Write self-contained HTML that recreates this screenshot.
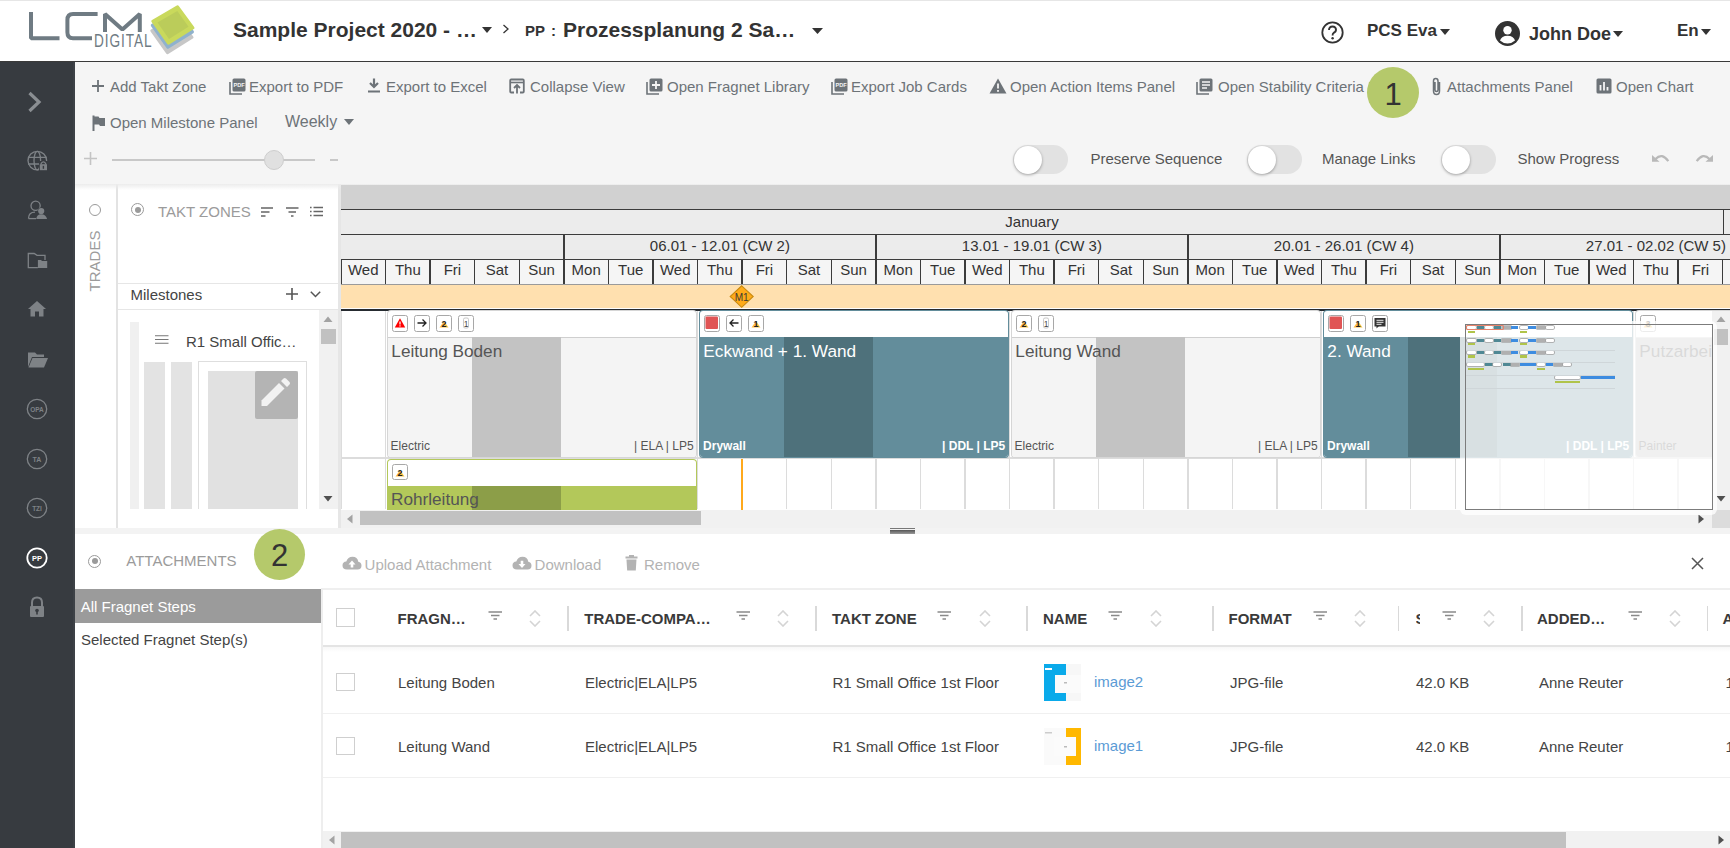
<!DOCTYPE html>
<html><head><meta charset="utf-8"><style>
html,body{margin:0;padding:0;}
body{width:1730px;height:848px;position:relative;overflow:hidden;background:#fff;font-family:"Liberation Sans", sans-serif;}
.t{position:absolute;line-height:1;white-space:nowrap;}
svg{display:block;}
</style></head><body>
<div style="position:absolute;left:0px;top:0px;width:1730px;height:61px;background:#fff;"></div>
<div style="position:absolute;left:0px;top:0px;width:1730px;height:1px;background:#e6e6e6;"></div>
<div style="position:absolute;left:0px;top:61px;width:1730px;height:1px;background:#3a3a3a;"></div>
<svg style="position:absolute;left:0px;top:0px;" width="200" height="61" viewBox="0 0 200 61">
<g fill="none" stroke="#6f7b83" stroke-width="4" stroke-linejoin="bevel">
<path d="M31 12 V38.3 H59.5"/>
<path d="M97.6 14 H73 Q67.4 14 67.4 20 V32.3 Q67.4 38.3 73 38.3 H92"/>
<path d="M105 32 V14 L122.4 29.5 L139.8 14 V32"/>
</g>
<text x="0" y="0" font-family="Liberation Sans" font-size="17.5" fill="#6f7b83" transform="translate(94,47.4) scale(0.78,1)" letter-spacing="1.2">DIGITAL</text>
<g stroke-linejoin="round" stroke-width="3">
<path d="M176.6 16.4 L192 37.3 L167.4 52.7 L151.8 30.7 Z" fill="#c7c7c7" stroke="#c7c7c7"/>
<path d="M177.1 11 L192.5 31.9 L167.9 47.3 L152.3 25.3 Z" fill="#8fb2cd" stroke="#8fb2cd"/>
<path d="M177.6 6.9 L193 27.8 L168.4 43.2 L152.8 21.2 Z" fill="#c9d95c" stroke="#c9d95c"/>
<path d="M177.3 11 L188.5 26.8 L169 39 L157.5 22.5 Z" fill="#bbcc5a"/>
</g>
</svg>
<div class="t" style="left:233px;top:19.22px;font-size:21px;color:#333;font-weight:bold;">Sample Project 2020 - …</div>
<svg style="position:absolute;left:482px;top:27px;" width="10" height="6" viewBox="0 0 10 6"><path d="M0 0 H10 L5 6 Z" fill="#333"/></svg>
<svg style="position:absolute;left:502px;top:24px;" width="8" height="10" viewBox="0 0 8 10"><path d="M1.5 1 L6 5 L1.5 9" fill="none" stroke="#333" stroke-width="1.3"/></svg>
<div class="t" style="left:525px;top:23.30px;font-size:15px;color:#333;font-weight:bold;">PP</div>
<div class="t" style="left:551px;top:23.30px;font-size:15px;color:#333;font-weight:bold;">:</div>
<div class="t" style="left:563px;top:19.22px;font-size:21px;color:#333;font-weight:bold;">Prozessplanung 2 Sa…</div>
<svg style="position:absolute;left:812px;top:28px;" width="11" height="6" viewBox="0 0 11 6"><path d="M0 0 H11 L5.5 6 Z" fill="#333"/></svg>
<svg style="position:absolute;left:1321px;top:21px;" width="23" height="23" viewBox="0 0 23 23"><circle cx="11.5" cy="11.5" r="10.2" fill="none" stroke="#333" stroke-width="1.8"/><path d="M8 9 Q8 5.5 11.5 5.5 Q15 5.5 15 8.8 Q15 11 12.5 12 Q11.6 12.5 11.6 14.5" fill="none" stroke="#333" stroke-width="1.9"/><circle cx="11.6" cy="17.3" r="1.2" fill="#333"/></svg>
<div class="t" style="left:1367px;top:21.61px;font-size:17px;color:#333;font-weight:bold;">PCS Eva</div>
<svg style="position:absolute;left:1440px;top:29px;" width="10" height="6" viewBox="0 0 10 6"><path d="M0 0 H10 L5 6 Z" fill="#333"/></svg>
<svg style="position:absolute;left:1495px;top:21px;" width="25" height="25" viewBox="0 0 25 25"><circle cx="12.5" cy="12.5" r="12.5" fill="#333"/><circle cx="12.5" cy="9.2" r="4.2" fill="#fff"/><path d="M5 19.5 Q6.5 14.8 12.5 14.8 Q18.5 14.8 20 19.5 Q16.8 22.5 12.5 22.5 Q8.2 22.5 5 19.5 Z" fill="#fff"/></svg>
<div class="t" style="left:1529px;top:24.76px;font-size:18px;color:#333;font-weight:bold;">John Doe</div>
<svg style="position:absolute;left:1613px;top:31px;" width="10" height="6" viewBox="0 0 10 6"><path d="M0 0 H10 L5 6 Z" fill="#333"/></svg>
<div class="t" style="left:1677px;top:21.61px;font-size:17px;color:#333;font-weight:bold;">En</div>
<svg style="position:absolute;left:1701px;top:29px;" width="10" height="6" viewBox="0 0 10 6"><path d="M0 0 H10 L5 6 Z" fill="#333"/></svg>
<div style="position:absolute;left:0px;top:62px;width:75px;height:786px;background:#373b40;"></div>
<div style="position:absolute;left:73px;top:62px;width:2px;height:786px;background:#3d4146;"></div>
<svg style="position:absolute;left:27px;top:91px;" width="15" height="22" viewBox="0 0 15 22"><path d="M2.5 2 L12 11 L2.5 20" fill="none" stroke="#8a8e92" stroke-width="3.2"/></svg>
<svg style="position:absolute;left:25px;top:149px;" width="24" height="24" viewBox="0 0 24 24"><g fill="none" stroke="#7e8286" stroke-width="1.3"><circle cx="12.3" cy="11.6" r="9.3"/><ellipse cx="12.3" cy="11.6" rx="3.3" ry="9.3"/><path d="M3 8.4 H21.6 M3 15 H15"/></g><rect x="14" y="12" width="9" height="10" fill="#373b40"/><rect x="14.8" y="15.2" width="7.2" height="6" fill="#7e8286"/><path d="M16.2 15.5 V14.3 Q18.4 11.3 20.6 14.3 V15.5" fill="none" stroke="#7e8286" stroke-width="1.3"/><rect x="17.7" y="16.8" width="1.4" height="3" fill="#373b40"/></svg>
<svg style="position:absolute;left:27px;top:200px;" width="22" height="22" viewBox="0 0 22 22"><g fill="none" stroke="#7e8286" stroke-width="1.3"><circle cx="8.6" cy="5.8" r="4.6"/><path d="M1.5 18.6 Q1.5 12.2 8 12.2"/><path d="M1.5 18.6 H9"/></g><circle cx="14.2" cy="11" r="3.6" fill="#373b40"/><circle cx="14.2" cy="11" r="3.1" fill="#7e8286"/><path d="M9.3 18.9 Q9.6 14.2 14.2 14.2 Q18.9 14.2 20.1 18.9 Z" fill="#7e8286"/></svg>
<svg style="position:absolute;left:27px;top:251px;" width="22" height="20" viewBox="0 0 22 20"><path d="M10.9 16.6 H1.3 V2.5 H7.2 L10 4.4 H18 V9" fill="none" stroke="#7e8286" stroke-width="1.3"/><path d="M10.9 9 H14 L15 10 H20.2 V17.1 H10.9 Z" fill="#7e8286"/></svg>
<svg style="position:absolute;left:27px;top:300px;" width="20" height="18" viewBox="0 0 20 18"><path d="M10 1 L19 9 H16.5 V16.5 H12 V11.5 H8 V16.5 H3.5 V9 H1 Z" fill="#7e8286"/></svg>
<svg style="position:absolute;left:27px;top:351px;" width="22" height="18" viewBox="0 0 22 18"><path d="M1 1.5 H8 L10 3.5 H17 V6 H5 L1 16 Z" fill="#7e8286"/><path d="M5.5 7 H21 L17 16.5 H1.5 Z" fill="#7e8286"/></svg>
<svg style="position:absolute;left:26px;top:398px;" width="22" height="22" viewBox="0 0 22 22"><circle cx="11" cy="11" r="9.7" fill="none" stroke="#7e8286" stroke-width="1.3"/><text x="11" y="13.5" text-anchor="middle" font-family="Liberation Sans" font-size="6.5" fill="#7e8286" font-weight="bold">OPA</text></svg>
<svg style="position:absolute;left:26px;top:448px;" width="22" height="22" viewBox="0 0 22 22"><circle cx="11" cy="11" r="9.7" fill="none" stroke="#7e8286" stroke-width="1.3"/><text x="11" y="13.5" text-anchor="middle" font-family="Liberation Sans" font-size="7" fill="#7e8286" font-weight="bold">TA</text></svg>
<svg style="position:absolute;left:26px;top:497px;" width="22" height="22" viewBox="0 0 22 22"><circle cx="11" cy="11" r="9.7" fill="none" stroke="#7e8286" stroke-width="1.3"/><text x="11" y="13.5" text-anchor="middle" font-family="Liberation Sans" font-size="6.5" fill="#7e8286" font-weight="bold">TZI</text></svg>
<svg style="position:absolute;left:26px;top:547px;" width="22" height="22" viewBox="0 0 22 22"><circle cx="11" cy="11" r="9.7" fill="none" stroke="#fff" stroke-width="1.8"/><text x="11" y="13.8" text-anchor="middle" font-family="Liberation Sans" font-size="7.5" fill="#fff" font-weight="bold">PP</text></svg>
<svg style="position:absolute;left:28px;top:596px;" width="18" height="22" viewBox="0 0 18 22"><path d="M4 10 V6.5 Q4 1.5 9 1.5 Q14 1.5 14 6.5 V10" fill="none" stroke="#7e8286" stroke-width="2"/><rect x="2" y="10" width="14" height="11" rx="1" fill="#7e8286"/><circle cx="9" cy="14.5" r="1.8" fill="#373b40"/><rect x="8.2" y="15" width="1.6" height="3.5" fill="#373b40"/></svg>
<div style="position:absolute;left:75px;top:62px;width:1655px;height:122px;background:#f5f5f5;"></div>
<!--TOOLBAR-->
<svg style="position:absolute;left:92px;top:80px;" width="12" height="12" viewBox="0 0 12 12"><path d="M6 0 V12 M0 6 H12" stroke="#6d7378" stroke-width="1.8"/></svg>
<div class="t" style="left:110px;top:79.30px;font-size:15px;color:#6d7378;font-weight:normal;">Add Takt Zone</div>
<svg style="position:absolute;left:229px;top:78px;" width="17" height="17" viewBox="0 0 17 17"><path d="M1 4 V16 H13" fill="none" stroke="#6d7378" stroke-width="1.6"/><rect x="3.5" y="0.5" width="13" height="13" rx="1.5" fill="#6d7378"/><text x="10" y="8.6" text-anchor="middle" font-family="Liberation Sans" font-weight="bold" font-size="5.6" fill="#f4f4f4">PDF</text></svg>
<div class="t" style="left:249px;top:79.30px;font-size:15px;color:#6d7378;font-weight:normal;">Export to PDF</div>
<svg style="position:absolute;left:367px;top:78px;" width="14" height="15" viewBox="0 0 14 15"><path d="M7 0.5 V8.5 M3 5 L7 9 L11 5" fill="none" stroke="#6d7378" stroke-width="2.2"/><rect x="1" y="12.5" width="12" height="2" fill="#6d7378"/></svg>
<div class="t" style="left:386px;top:79.30px;font-size:15px;color:#6d7378;font-weight:normal;">Export to Excel</div>
<svg style="position:absolute;left:509px;top:78px;" width="16" height="16" viewBox="0 0 16 16"><path d="M5 14.5 H2.2 Q1.2 14.5 1.2 13.5 V2.5 Q1.2 1.5 2.2 1.5 H13.8 Q14.8 1.5 14.8 2.5 V13.5 Q14.8 14.5 13.8 14.5 H11" fill="none" stroke="#6d7378" stroke-width="1.8"/><path d="M8 15.5 V7.5 M5 10 L8 7 L11 10" fill="none" stroke="#6d7378" stroke-width="1.8"/><path d="M1.2 4.5 H14.8" stroke="#6d7378" stroke-width="1.6"/></svg>
<div class="t" style="left:530px;top:79.30px;font-size:15px;color:#6d7378;font-weight:normal;">Collapse View</div>
<svg style="position:absolute;left:646px;top:78px;" width="17" height="17" viewBox="0 0 17 17"><path d="M1 4 V16 H13" fill="none" stroke="#6d7378" stroke-width="1.6"/><rect x="3.5" y="0.5" width="13" height="13" rx="1.5" fill="#6d7378"/><path d="M10 3 V11 M6 7 H14" stroke="#f4f4f4" stroke-width="1.8"/></svg>
<div class="t" style="left:667px;top:79.30px;font-size:15px;color:#6d7378;font-weight:normal;">Open Fragnet Library</div>
<svg style="position:absolute;left:831px;top:78px;" width="17" height="17" viewBox="0 0 17 17"><path d="M1 4 V16 H13" fill="none" stroke="#6d7378" stroke-width="1.6"/><rect x="3.5" y="0.5" width="13" height="13" rx="1.5" fill="#6d7378"/><text x="10" y="8.6" text-anchor="middle" font-family="Liberation Sans" font-weight="bold" font-size="5.6" fill="#f4f4f4">PDF</text></svg>
<div class="t" style="left:851px;top:79.30px;font-size:15px;color:#6d7378;font-weight:normal;">Export Job Cards</div>
<svg style="position:absolute;left:989px;top:78px;" width="18" height="16" viewBox="0 0 18 16"><path d="M9 0.5 L17.5 15.5 H0.5 Z" fill="#6d7378"/><rect x="8.1" y="5.5" width="1.8" height="5" fill="#f4f4f4"/><rect x="8.1" y="12" width="1.8" height="1.8" fill="#f4f4f4"/></svg>
<div class="t" style="left:1010px;top:79.30px;font-size:15px;color:#6d7378;font-weight:normal;">Open Action Items Panel</div>
<svg style="position:absolute;left:1196px;top:78px;" width="18" height="17" viewBox="0 0 18 17"><path d="M1 4 V16 H13" fill="none" stroke="#6d7378" stroke-width="1.6"/><rect x="3.5" y="0.5" width="13" height="13" rx="1.5" fill="#6d7378"/><path d="M6 4 H14 M6 7 H14 M6 10 H11" stroke="#f4f4f4" stroke-width="1.5"/></svg>
<div class="t" style="left:1218px;top:79.30px;font-size:15px;color:#6d7378;font-weight:normal;">Open Stability Criteria Panel</div>
<svg style="position:absolute;left:1430px;top:77px;" width="13" height="19" viewBox="0 0 13 19"><path d="M9.5 5 V14 Q9.5 17.5 6.5 17.5 Q3.5 17.5 3.5 14 V4 Q3.5 1.5 5.7 1.5 Q8 1.5 8 4 V13 Q8 14.5 6.5 14.5 Q5 14.5 5 13 V5" fill="none" stroke="#6d7378" stroke-width="1.5"/></svg>
<div class="t" style="left:1447px;top:79.30px;font-size:15px;color:#6d7378;font-weight:normal;">Attachments Panel</div>
<svg style="position:absolute;left:1596px;top:78px;" width="16" height="16" viewBox="0 0 16 16"><rect x="0.5" y="0.5" width="15" height="15" rx="1.5" fill="#6d7378"/><path d="M4.5 7 V12.5 M8 4 V12.5 M11.5 9 V12.5" stroke="#f4f4f4" stroke-width="1.8"/></svg>
<div class="t" style="left:1616px;top:79.30px;font-size:15px;color:#6d7378;font-weight:normal;">Open Chart</div>
<div style="position:absolute;left:1367px;top:67px;width:52px;height:51px;border-radius:50%;background:#b5c96b;"></div>
<div class="t" style="left:1384.5px;top:78.96px;font-size:31px;color:#333;font-weight:normal;">1</div>
<svg style="position:absolute;left:92px;top:115px;" width="14" height="16" viewBox="0 0 14 16"><path d="M1.5 0.5 V16" stroke="#6d7378" stroke-width="2"/><path d="M1.5 1.5 H6.5 L7.5 3 H13 V11 H8 L7 9.5 H1.5 Z" fill="#6d7378"/></svg>
<div class="t" style="left:110px;top:115.30px;font-size:15px;color:#6d7378;font-weight:normal;">Open Milestone Panel</div>
<div class="t" style="left:285px;top:114.46px;font-size:16px;color:#6d7378;font-weight:normal;">Weekly</div>
<svg style="position:absolute;left:344px;top:119px;" width="10" height="6" viewBox="0 0 10 6"><path d="M0 0 H10 L5 6 Z" fill="#6d7378"/></svg>
<svg style="position:absolute;left:84px;top:152px;" width="13" height="13" viewBox="0 0 13 13"><path d="M6.5 0 V13 M0 6.5 H13" stroke="#c4c4c4" stroke-width="1.6"/></svg>
<div style="position:absolute;left:112px;top:159px;width:203px;height:2px;background:#c8c8c8;"></div>
<div style="position:absolute;left:264px;top:150px;width:18px;height:18px;border-radius:50%;background:#e0e0e0;border:1px solid #cdcdcd;"></div>
<div style="position:absolute;left:330px;top:159px;width:8px;height:1.5px;background:#c8c8c8;"></div>
<div style="position:absolute;left:1013px;top:145px;width:55px;height:29px;border-radius:15px;background:#e2e2e2;"></div>
<div style="position:absolute;left:1014px;top:145.5px;width:28px;height:28px;border-radius:50%;background:#fff;box-shadow:0 1px 3px rgba(0,0,0,0.35);"></div>
<div style="position:absolute;left:1247px;top:145px;width:55px;height:29px;border-radius:15px;background:#e2e2e2;"></div>
<div style="position:absolute;left:1248px;top:145.5px;width:28px;height:28px;border-radius:50%;background:#fff;box-shadow:0 1px 3px rgba(0,0,0,0.35);"></div>
<div style="position:absolute;left:1441px;top:145px;width:55px;height:29px;border-radius:15px;background:#e2e2e2;"></div>
<div style="position:absolute;left:1442px;top:145.5px;width:28px;height:28px;border-radius:50%;background:#fff;box-shadow:0 1px 3px rgba(0,0,0,0.35);"></div>
<div class="t" style="left:1090.5px;top:151.30px;font-size:15px;color:#555;font-weight:normal;">Preserve Sequence</div>
<div class="t" style="left:1322px;top:151.30px;font-size:15px;color:#555;font-weight:normal;">Manage Links</div>
<div class="t" style="left:1517.5px;top:151.30px;font-size:15px;color:#555;font-weight:normal;">Show Progress</div>
<svg style="position:absolute;left:1651px;top:153px;" width="19" height="11" viewBox="0 0 19 11"><path d="M4.5 6 Q11 -0.8 17.3 8.2" fill="none" stroke="#b9b9b9" stroke-width="2.2"/><path d="M1 2 V8.8 H8.5 Z" fill="#b9b9b9"/></svg>
<svg style="position:absolute;left:1695px;top:153px;" width="19" height="11" viewBox="0 0 19 11"><path d="M14.5 6 Q8 -0.8 1.7 8.2" fill="none" stroke="#b9b9b9" stroke-width="2.2"/><path d="M18 2 V8.8 H10.5 Z" fill="#b9b9b9"/></svg>
<!--PANELS-->
<div style="position:absolute;left:75px;top:184px;width:1655px;height:344px;background:#fff;"></div>
<div style="position:absolute;left:116px;top:184px;width:2px;height:344px;background:#e3e3e3;"></div>
<div style="position:absolute;left:88.5px;top:203.5px;width:12px;height:12px;border-radius:50%;border:1.3px solid #9a9a9a;box-sizing:border-box;"></div>
<div class="t" style="left:94px;top:261px;font-size:15px;color:#9b9b9b;transform:translate(-50%,-50%) rotate(-90deg);">TRADES</div>
<div style="position:absolute;left:131px;top:203px;width:13px;height:13px;border-radius:50%;border:1.3px solid #9a9a9a;box-sizing:border-box;"></div>
<div style="position:absolute;left:134.5px;top:206.5px;width:6px;height:6px;border-radius:50%;background:#9a9a9a;"></div>
<div class="t" style="left:158px;top:204.30px;font-size:15px;color:#9b9b9b;font-weight:normal;">TAKT ZONES</div>
<svg style="position:absolute;left:261px;top:207px;" width="13" height="11" viewBox="0 0 13 11"><path d="M0 1 H12 M0 5 H8.5 M0 9 H4.5" stroke="#666" stroke-width="1.6"/></svg>
<svg style="position:absolute;left:286px;top:207px;" width="13" height="11" viewBox="0 0 13 11"><path d="M0 1 H12.5 M2.5 5 H10 M5 9 H7.5" stroke="#666" stroke-width="1.6"/></svg>
<svg style="position:absolute;left:310px;top:206px;" width="14" height="12" viewBox="0 0 14 12"><path d="M0 1.5 H1.6 M0 5.5 H1.6 M0 9.5 H1.6 M3.5 1.5 H13 M3.5 5.5 H13 M3.5 9.5 H13" stroke="#666" stroke-width="1.3"/></svg>
<div style="position:absolute;left:118px;top:283px;width:220px;height:1px;background:#e6e6e6;"></div>
<div style="position:absolute;left:118px;top:309px;width:220px;height:1px;background:#e6e6e6;"></div>
<div class="t" style="left:130.5px;top:286.80px;font-size:15px;color:#444;font-weight:normal;">Milestones</div>
<svg style="position:absolute;left:286px;top:288px;" width="12" height="12" viewBox="0 0 12 12"><path d="M6 0 V12 M0 6 H12" stroke="#555" stroke-width="1.6"/></svg>
<svg style="position:absolute;left:310px;top:291px;" width="11" height="7" viewBox="0 0 11 7"><path d="M0.8 0.8 L5.5 5.5 L10.2 0.8" fill="none" stroke="#555" stroke-width="1.5"/></svg>
<div style="position:absolute;left:130px;top:322px;width:9px;height:187px;background:#f0f0f0;"></div>
<svg style="position:absolute;left:155px;top:335px;" width="14" height="9" viewBox="0 0 14 9"><path d="M0 0.75 H13.5 M0 4.5 H13.5 M0 8.25 H13.5" stroke="#777" stroke-width="1.2"/></svg>
<div class="t" style="left:186px;top:334.30px;font-size:15px;color:#444;font-weight:normal;">R1 Small Offic…</div>
<div style="position:absolute;left:144px;top:361.5px;width:20.5px;height:147px;background:#e3e3e3;"></div>
<div style="position:absolute;left:171px;top:361.5px;width:21px;height:147px;background:#e3e3e3;"></div>
<div style="position:absolute;left:198px;top:361px;width:109px;height:148px;border:1px solid #dedede;border-bottom:none;box-sizing:border-box;"></div>
<div style="position:absolute;left:208px;top:371px;width:89.5px;height:138px;background:#e1e1e1;"></div>
<div style="position:absolute;left:255px;top:371px;width:42.5px;height:48px;background:#b4b4b4;border-radius:2px;"></div>
<svg style="position:absolute;left:260px;top:376px;" width="32" height="32" viewBox="0 0 32 32"><path d="M1.5 24.5 L19 7 L24.5 12.5 L7 30 H1.5 Z" fill="#f2f2f2"/><path d="M21 5 L23.5 2.5 Q24.7 1.3 26 2.5 L29.5 6 Q30.7 7.3 29.5 8.5 L27 11 Z" fill="#f2f2f2"/></svg>
<div style="position:absolute;left:319px;top:310px;width:19px;height:199px;background:#f1f1f1;"></div>
<div style="position:absolute;left:321px;top:329px;width:15px;height:15px;background:#c1c1c1;"></div>
<svg style="position:absolute;left:323px;top:316px;" width="10" height="7" viewBox="0 0 10 7"><path d="M5 0.5 L9.5 6 H0.5 Z" fill="#a3a3a3"/></svg>
<svg style="position:absolute;left:323px;top:495px;" width="10" height="7" viewBox="0 0 10 7"><path d="M5 6.5 L9.5 1 H0.5 Z" fill="#505050"/></svg>
<div style="position:absolute;left:338px;top:184px;width:3px;height:344px;background:#e6e6e6;"></div>
<div style="position:absolute;left:75px;top:184px;width:1655px;height:6px;background:linear-gradient(#ececec,rgba(255,255,255,0));"></div>
<div style="position:absolute;left:341px;top:184px;width:1389px;height:344px;overflow:hidden;">
<div style="position:absolute;left:0.00px;top:1.00px;width:1389.00px;height:24.50px;background:#d1d1d1;"></div>
<div style="position:absolute;left:0.00px;top:25.00px;width:1389.00px;height:1.20px;background:#3c3c3c;"></div>
<div style="position:absolute;left:0.00px;top:26.20px;width:1389.00px;height:23.50px;background:#ececec;"></div>
<div style="position:absolute;left:1381.80px;top:26.00px;width:1.50px;height:24.00px;background:#3c3c3c;"></div>
<div class="t" style="left:664.30px;top:29.80px;font-size:15px;color:#333;font-weight:normal;">January</div>
<div style="position:absolute;left:0.00px;top:49.50px;width:1389.00px;height:1.50px;background:#3c3c3c;"></div>
<div style="position:absolute;left:0.00px;top:51.00px;width:1389.00px;height:24.00px;background:#ececec;"></div>
<div style="position:absolute;left:222.11px;top:51.00px;width:1.50px;height:24.00px;background:#3c3c3c;"></div>
<div class="t" style="left:308.86px;top:53.80px;font-size:15px;color:#333;font-weight:normal;">06.01 - 12.01 (CW 2)</div>
<div style="position:absolute;left:534.11px;top:51.00px;width:1.50px;height:24.00px;background:#3c3c3c;"></div>
<div class="t" style="left:620.86px;top:53.80px;font-size:15px;color:#333;font-weight:normal;">13.01 - 19.01 (CW 3)</div>
<div style="position:absolute;left:846.11px;top:51.00px;width:1.50px;height:24.00px;background:#3c3c3c;"></div>
<div class="t" style="left:932.86px;top:53.80px;font-size:15px;color:#333;font-weight:normal;">20.01 - 26.01 (CW 4)</div>
<div style="position:absolute;left:1158.11px;top:51.00px;width:1.50px;height:24.00px;background:#3c3c3c;"></div>
<div class="t" style="left:1244.86px;top:53.80px;font-size:15px;color:#333;font-weight:normal;">27.01 - 02.02 (CW 5)</div>
<div style="position:absolute;left:0.00px;top:74.50px;width:1389.00px;height:1.50px;background:#3c3c3c;"></div>
<div style="position:absolute;left:0.00px;top:76.00px;width:1389.00px;height:24.00px;background:#f5f5f5;"></div>
<div style="position:absolute;left:-0.75px;top:75.00px;width:1.50px;height:25.00px;background:#3c3c3c;"></div>
<div class="t" style="left:0.00px;top:78.10px;width:44.57px;text-align:center;font-size:15px;color:#333;">Wed</div>
<div style="position:absolute;left:43.82px;top:75.00px;width:1.50px;height:25.00px;background:#3c3c3c;"></div>
<div class="t" style="left:44.57px;top:78.10px;width:44.57px;text-align:center;font-size:15px;color:#333;">Thu</div>
<div style="position:absolute;left:88.39px;top:75.00px;width:1.50px;height:25.00px;background:#3c3c3c;"></div>
<div class="t" style="left:89.14px;top:78.10px;width:44.57px;text-align:center;font-size:15px;color:#333;">Fri</div>
<div style="position:absolute;left:132.96px;top:75.00px;width:1.50px;height:25.00px;background:#3c3c3c;"></div>
<div class="t" style="left:133.71px;top:78.10px;width:44.57px;text-align:center;font-size:15px;color:#333;">Sat</div>
<div style="position:absolute;left:177.54px;top:75.00px;width:1.50px;height:25.00px;background:#3c3c3c;"></div>
<div class="t" style="left:178.29px;top:78.10px;width:44.57px;text-align:center;font-size:15px;color:#333;">Sun</div>
<div style="position:absolute;left:222.11px;top:75.00px;width:1.50px;height:25.00px;background:#3c3c3c;"></div>
<div class="t" style="left:222.86px;top:78.10px;width:44.57px;text-align:center;font-size:15px;color:#333;">Mon</div>
<div style="position:absolute;left:266.68px;top:75.00px;width:1.50px;height:25.00px;background:#3c3c3c;"></div>
<div class="t" style="left:267.43px;top:78.10px;width:44.57px;text-align:center;font-size:15px;color:#333;">Tue</div>
<div style="position:absolute;left:311.25px;top:75.00px;width:1.50px;height:25.00px;background:#3c3c3c;"></div>
<div class="t" style="left:312.00px;top:78.10px;width:44.57px;text-align:center;font-size:15px;color:#333;">Wed</div>
<div style="position:absolute;left:355.82px;top:75.00px;width:1.50px;height:25.00px;background:#3c3c3c;"></div>
<div class="t" style="left:356.57px;top:78.10px;width:44.57px;text-align:center;font-size:15px;color:#333;">Thu</div>
<div style="position:absolute;left:400.39px;top:75.00px;width:1.50px;height:25.00px;background:#3c3c3c;"></div>
<div class="t" style="left:401.14px;top:78.10px;width:44.57px;text-align:center;font-size:15px;color:#333;">Fri</div>
<div style="position:absolute;left:444.96px;top:75.00px;width:1.50px;height:25.00px;background:#3c3c3c;"></div>
<div class="t" style="left:445.71px;top:78.10px;width:44.57px;text-align:center;font-size:15px;color:#333;">Sat</div>
<div style="position:absolute;left:489.54px;top:75.00px;width:1.50px;height:25.00px;background:#3c3c3c;"></div>
<div class="t" style="left:490.29px;top:78.10px;width:44.57px;text-align:center;font-size:15px;color:#333;">Sun</div>
<div style="position:absolute;left:534.11px;top:75.00px;width:1.50px;height:25.00px;background:#3c3c3c;"></div>
<div class="t" style="left:534.86px;top:78.10px;width:44.57px;text-align:center;font-size:15px;color:#333;">Mon</div>
<div style="position:absolute;left:578.68px;top:75.00px;width:1.50px;height:25.00px;background:#3c3c3c;"></div>
<div class="t" style="left:579.43px;top:78.10px;width:44.57px;text-align:center;font-size:15px;color:#333;">Tue</div>
<div style="position:absolute;left:623.25px;top:75.00px;width:1.50px;height:25.00px;background:#3c3c3c;"></div>
<div class="t" style="left:624.00px;top:78.10px;width:44.57px;text-align:center;font-size:15px;color:#333;">Wed</div>
<div style="position:absolute;left:667.82px;top:75.00px;width:1.50px;height:25.00px;background:#3c3c3c;"></div>
<div class="t" style="left:668.57px;top:78.10px;width:44.57px;text-align:center;font-size:15px;color:#333;">Thu</div>
<div style="position:absolute;left:712.39px;top:75.00px;width:1.50px;height:25.00px;background:#3c3c3c;"></div>
<div class="t" style="left:713.14px;top:78.10px;width:44.57px;text-align:center;font-size:15px;color:#333;">Fri</div>
<div style="position:absolute;left:756.96px;top:75.00px;width:1.50px;height:25.00px;background:#3c3c3c;"></div>
<div class="t" style="left:757.71px;top:78.10px;width:44.57px;text-align:center;font-size:15px;color:#333;">Sat</div>
<div style="position:absolute;left:801.54px;top:75.00px;width:1.50px;height:25.00px;background:#3c3c3c;"></div>
<div class="t" style="left:802.29px;top:78.10px;width:44.57px;text-align:center;font-size:15px;color:#333;">Sun</div>
<div style="position:absolute;left:846.11px;top:75.00px;width:1.50px;height:25.00px;background:#3c3c3c;"></div>
<div class="t" style="left:846.86px;top:78.10px;width:44.57px;text-align:center;font-size:15px;color:#333;">Mon</div>
<div style="position:absolute;left:890.68px;top:75.00px;width:1.50px;height:25.00px;background:#3c3c3c;"></div>
<div class="t" style="left:891.43px;top:78.10px;width:44.57px;text-align:center;font-size:15px;color:#333;">Tue</div>
<div style="position:absolute;left:935.25px;top:75.00px;width:1.50px;height:25.00px;background:#3c3c3c;"></div>
<div class="t" style="left:936.00px;top:78.10px;width:44.57px;text-align:center;font-size:15px;color:#333;">Wed</div>
<div style="position:absolute;left:979.82px;top:75.00px;width:1.50px;height:25.00px;background:#3c3c3c;"></div>
<div class="t" style="left:980.57px;top:78.10px;width:44.57px;text-align:center;font-size:15px;color:#333;">Thu</div>
<div style="position:absolute;left:1024.39px;top:75.00px;width:1.50px;height:25.00px;background:#3c3c3c;"></div>
<div class="t" style="left:1025.14px;top:78.10px;width:44.57px;text-align:center;font-size:15px;color:#333;">Fri</div>
<div style="position:absolute;left:1068.96px;top:75.00px;width:1.50px;height:25.00px;background:#3c3c3c;"></div>
<div class="t" style="left:1069.71px;top:78.10px;width:44.57px;text-align:center;font-size:15px;color:#333;">Sat</div>
<div style="position:absolute;left:1113.54px;top:75.00px;width:1.50px;height:25.00px;background:#3c3c3c;"></div>
<div class="t" style="left:1114.29px;top:78.10px;width:44.57px;text-align:center;font-size:15px;color:#333;">Sun</div>
<div style="position:absolute;left:1158.11px;top:75.00px;width:1.50px;height:25.00px;background:#3c3c3c;"></div>
<div class="t" style="left:1158.86px;top:78.10px;width:44.57px;text-align:center;font-size:15px;color:#333;">Mon</div>
<div style="position:absolute;left:1202.68px;top:75.00px;width:1.50px;height:25.00px;background:#3c3c3c;"></div>
<div class="t" style="left:1203.43px;top:78.10px;width:44.57px;text-align:center;font-size:15px;color:#333;">Tue</div>
<div style="position:absolute;left:1247.25px;top:75.00px;width:1.50px;height:25.00px;background:#3c3c3c;"></div>
<div class="t" style="left:1248.00px;top:78.10px;width:44.57px;text-align:center;font-size:15px;color:#333;">Wed</div>
<div style="position:absolute;left:1291.82px;top:75.00px;width:1.50px;height:25.00px;background:#3c3c3c;"></div>
<div class="t" style="left:1292.57px;top:78.10px;width:44.57px;text-align:center;font-size:15px;color:#333;">Thu</div>
<div style="position:absolute;left:1336.39px;top:75.00px;width:1.50px;height:25.00px;background:#3c3c3c;"></div>
<div class="t" style="left:1337.14px;top:78.10px;width:44.57px;text-align:center;font-size:15px;color:#333;">Fri</div>
<div style="position:absolute;left:1380.96px;top:75.00px;width:1.50px;height:25.00px;background:#3c3c3c;"></div>
<div class="t" style="left:1381.71px;top:78.10px;width:44.57px;text-align:center;font-size:15px;color:#333;">Sat</div>
<div style="position:absolute;left:1425.54px;top:75.00px;width:1.50px;height:25.00px;background:#3c3c3c;"></div>
<div class="t" style="left:1426.29px;top:78.10px;width:44.57px;text-align:center;font-size:15px;color:#333;">Sun</div>
<div style="position:absolute;left:0.00px;top:99.50px;width:1389.00px;height:1.00px;background:#9a9a9a;"></div>
<div style="position:absolute;left:0.00px;top:100.50px;width:1389.00px;height:23.30px;background:#ffe0af;"></div>
<div style="position:absolute;left:0.00px;top:123.80px;width:1389.00px;height:1.50px;background:#fdfdfd;"></div>
<div style="position:absolute;left:0.00px;top:125.30px;width:1389.00px;height:1.80px;background:#262b30;"></div>
<svg style="position:absolute;left:388.00px;top:101.00px;" width="26" height="24" viewBox="0 0 26 24"><path d="M12.7 0.8 L24.2 11.5 L12.7 22.3 L1.2 11.5 Z" fill="#ffab1a" stroke="#c98a10" stroke-width="1.1"/><text x="12.7" y="15.6" text-anchor="middle" font-family="Liberation Sans" font-size="11.8" fill="#3d3a33" textLength="14" lengthAdjust="spacingAndGlyphs">M1</text></svg>
<div style="position:absolute;left:0.00px;top:127.00px;width:1389.00px;height:217.00px;background:#fff;"></div>
<div style="position:absolute;left:-0.75px;top:127.00px;width:1.50px;height:198.00px;background:#dcdcdc;"></div>
<div style="position:absolute;left:43.82px;top:127.00px;width:1.50px;height:198.00px;background:#dcdcdc;"></div>
<div style="position:absolute;left:88.39px;top:127.00px;width:1.50px;height:198.00px;background:#dcdcdc;"></div>
<div style="position:absolute;left:132.96px;top:127.00px;width:1.50px;height:198.00px;background:#dcdcdc;"></div>
<div style="position:absolute;left:177.54px;top:127.00px;width:1.50px;height:198.00px;background:#dcdcdc;"></div>
<div style="position:absolute;left:222.11px;top:127.00px;width:1.50px;height:198.00px;background:#dcdcdc;"></div>
<div style="position:absolute;left:266.68px;top:127.00px;width:1.50px;height:198.00px;background:#dcdcdc;"></div>
<div style="position:absolute;left:311.25px;top:127.00px;width:1.50px;height:198.00px;background:#dcdcdc;"></div>
<div style="position:absolute;left:355.82px;top:127.00px;width:1.50px;height:198.00px;background:#dcdcdc;"></div>
<div style="position:absolute;left:400.39px;top:127.00px;width:1.50px;height:198.00px;background:#dcdcdc;"></div>
<div style="position:absolute;left:444.96px;top:127.00px;width:1.50px;height:198.00px;background:#dcdcdc;"></div>
<div style="position:absolute;left:489.54px;top:127.00px;width:1.50px;height:198.00px;background:#dcdcdc;"></div>
<div style="position:absolute;left:534.11px;top:127.00px;width:1.50px;height:198.00px;background:#dcdcdc;"></div>
<div style="position:absolute;left:578.68px;top:127.00px;width:1.50px;height:198.00px;background:#dcdcdc;"></div>
<div style="position:absolute;left:623.25px;top:127.00px;width:1.50px;height:198.00px;background:#dcdcdc;"></div>
<div style="position:absolute;left:667.82px;top:127.00px;width:1.50px;height:198.00px;background:#dcdcdc;"></div>
<div style="position:absolute;left:712.39px;top:127.00px;width:1.50px;height:198.00px;background:#dcdcdc;"></div>
<div style="position:absolute;left:756.96px;top:127.00px;width:1.50px;height:198.00px;background:#dcdcdc;"></div>
<div style="position:absolute;left:801.54px;top:127.00px;width:1.50px;height:198.00px;background:#dcdcdc;"></div>
<div style="position:absolute;left:846.11px;top:127.00px;width:1.50px;height:198.00px;background:#dcdcdc;"></div>
<div style="position:absolute;left:890.68px;top:127.00px;width:1.50px;height:198.00px;background:#dcdcdc;"></div>
<div style="position:absolute;left:935.25px;top:127.00px;width:1.50px;height:198.00px;background:#dcdcdc;"></div>
<div style="position:absolute;left:979.82px;top:127.00px;width:1.50px;height:198.00px;background:#dcdcdc;"></div>
<div style="position:absolute;left:1024.39px;top:127.00px;width:1.50px;height:198.00px;background:#dcdcdc;"></div>
<div style="position:absolute;left:1068.96px;top:127.00px;width:1.50px;height:198.00px;background:#dcdcdc;"></div>
<div style="position:absolute;left:1113.54px;top:127.00px;width:1.50px;height:198.00px;background:#dcdcdc;"></div>
<div style="position:absolute;left:1158.11px;top:127.00px;width:1.50px;height:198.00px;background:#dcdcdc;"></div>
<div style="position:absolute;left:1202.68px;top:127.00px;width:1.50px;height:198.00px;background:#dcdcdc;"></div>
<div style="position:absolute;left:1247.25px;top:127.00px;width:1.50px;height:198.00px;background:#dcdcdc;"></div>
<div style="position:absolute;left:1291.82px;top:127.00px;width:1.50px;height:198.00px;background:#dcdcdc;"></div>
<div style="position:absolute;left:1336.39px;top:127.00px;width:1.50px;height:198.00px;background:#dcdcdc;"></div>
<div style="position:absolute;left:1380.96px;top:127.00px;width:1.50px;height:198.00px;background:#dcdcdc;"></div>
<div style="position:absolute;left:1425.54px;top:127.00px;width:1.50px;height:198.00px;background:#dcdcdc;"></div>
<div style="position:absolute;left:1470.11px;top:127.00px;width:1.50px;height:198.00px;background:#dcdcdc;"></div>
<div style="position:absolute;left:0.00px;top:273.00px;width:1389.00px;height:1.50px;background:#dcdcdc;"></div>
<div style="position:absolute;left:399.50px;top:274.50px;width:2.00px;height:51.00px;background:#ffa91c;"></div>
<div style="position:absolute;left:46.57px;top:127.00px;width:308.50px;height:145.50px;background:#fff;border-radius:3px;box-shadow:0 0 0 1px #d6d6d6;overflow:hidden;"></div>
<div style="position:absolute;left:46.57px;top:153.00px;width:308.50px;height:119.50px;background:#f4f4f4;border-radius:0 0 3px 3px;"></div>
<div style="position:absolute;left:46.57px;top:152.50px;width:308.50px;height:1.00px;background:#cfcfcf;"></div>
<div style="position:absolute;left:131.21px;top:153.00px;width:88.94px;height:119.50px;background:#c3c3c3;"></div>
<div style="position:absolute;left:50.57px;top:131.00px;width:16.50px;height:16.50px;background:#fff;border:1px solid #a8a8a8;border-radius:2.5px;box-sizing:border-box;"></div>
<svg style="position:absolute;left:50.57px;top:131.00px;" width="16" height="16" viewBox="0 0 16 16"><path d="M8 3.2 L13.2 12.5 H2.8 Z" fill="#f00"/><rect x="7.4" y="6.5" width="1.2" height="3" fill="#fff"/><rect x="7.4" y="10.3" width="1.2" height="1.2" fill="#fff"/></svg>
<div style="position:absolute;left:72.57px;top:131.00px;width:16.50px;height:16.50px;background:#fff;border:1px solid #a8a8a8;border-radius:2.5px;box-sizing:border-box;"></div>
<svg style="position:absolute;left:72.57px;top:131.00px;" width="16" height="16" viewBox="0 0 16 16"><path d="M3.5 8 H12 M8.5 4.5 L12 8 L8.5 11.5" fill="none" stroke="#222" stroke-width="1.3"/></svg>
<div style="position:absolute;left:94.57px;top:131.00px;width:16.50px;height:16.50px;background:#fff;border:1px solid #a8a8a8;border-radius:2.5px;box-sizing:border-box;"></div>
<svg style="position:absolute;left:94.57px;top:131.00px;" width="16" height="16" viewBox="0 0 16 16"><path d="M8 6 L12.5 12.5 H3.5 Z" fill="#ffbf40"/><text x="8" y="11.5" text-anchor="middle" font-family="Liberation Sans" font-weight="bold" font-size="9" fill="#222">2</text></svg>
<div style="position:absolute;left:116.57px;top:131.00px;width:16.50px;height:16.50px;background:#fff;border:1px solid #a8a8a8;border-radius:2.5px;box-sizing:border-box;"></div>
<svg style="position:absolute;left:116.57px;top:131.00px;" width="16" height="16" viewBox="0 0 16 16"><rect x="5.5" y="3" width="5" height="10" rx="1.5" fill="#fff" stroke="#bbb" stroke-width="0.8"/><text x="8" y="11.5" text-anchor="middle" font-family="Liberation Sans" font-size="8.5" fill="#444">1</text></svg>
<div class="t" style="left:50.37px;top:159.24px;font-size:17.2px;color:#555;font-weight:normal;">Leitung Boden</div>
<div class="t" style="left:49.57px;top:255.64px;font-size:12px;color:#555;font-weight:normal;">Electric</div>
<div class="t" style="left:293.07px;top:255.64px;font-size:12px;color:#555;font-weight:normal;width:59px;text-align:right;">| ELA | LP5</div>
<div style="position:absolute;left:358.57px;top:127.00px;width:308.50px;height:145.50px;background:#fff;border-radius:3px;box-shadow:0 0 0 1px #638d9b;overflow:hidden;"></div>
<div style="position:absolute;left:358.57px;top:153.00px;width:308.50px;height:119.50px;background:#638d9b;border-radius:0 0 3px 3px;"></div>
<div style="position:absolute;left:443.21px;top:153.00px;width:88.94px;height:119.50px;background:#4e717b;"></div>
<div style="position:absolute;left:362.57px;top:131.00px;width:16.50px;height:16.50px;background:#fff;border:1px solid #a8a8a8;border-radius:2.5px;box-sizing:border-box;"></div>
<svg style="position:absolute;left:362.57px;top:131.00px;" width="16" height="16" viewBox="0 0 16 16"><rect x="1.5" y="1.5" width="12.5" height="12.5" rx="1" fill="#e05555"/></svg>
<div style="position:absolute;left:384.57px;top:131.00px;width:16.50px;height:16.50px;background:#fff;border:1px solid #a8a8a8;border-radius:2.5px;box-sizing:border-box;"></div>
<svg style="position:absolute;left:384.57px;top:131.00px;" width="16" height="16" viewBox="0 0 16 16"><path d="M12.5 8 H4 M7.5 4.5 L4 8 L7.5 11.5" fill="none" stroke="#222" stroke-width="1.3"/></svg>
<div style="position:absolute;left:406.57px;top:131.00px;width:16.50px;height:16.50px;background:#fff;border:1px solid #a8a8a8;border-radius:2.5px;box-sizing:border-box;"></div>
<svg style="position:absolute;left:406.57px;top:131.00px;" width="16" height="16" viewBox="0 0 16 16"><path d="M8 6 L12.5 12.5 H3.5 Z" fill="#ffbf40"/><text x="8" y="11.5" text-anchor="middle" font-family="Liberation Sans" font-weight="bold" font-size="9" fill="#222">1</text></svg>
<div class="t" style="left:362.37px;top:159.24px;font-size:17.2px;color:#fff;font-weight:normal;">Eckwand + 1. Wand</div>
<div class="t" style="left:362.07px;top:255.64px;font-size:12px;color:#fff;font-weight:bold;">Drywall</div>
<div class="t" style="left:601.07px;top:255.64px;font-size:12px;color:#fff;font-weight:bold;width:63px;text-align:right;">| DDL | LP5</div>
<div style="position:absolute;left:670.57px;top:127.00px;width:308.50px;height:145.50px;background:#fff;border-radius:3px;box-shadow:0 0 0 1px #d6d6d6;overflow:hidden;"></div>
<div style="position:absolute;left:670.57px;top:153.00px;width:308.50px;height:119.50px;background:#f4f4f4;border-radius:0 0 3px 3px;"></div>
<div style="position:absolute;left:670.57px;top:152.50px;width:308.50px;height:1.00px;background:#cfcfcf;"></div>
<div style="position:absolute;left:755.21px;top:153.00px;width:88.94px;height:119.50px;background:#c3c3c3;"></div>
<div style="position:absolute;left:674.57px;top:131.00px;width:16.50px;height:16.50px;background:#fff;border:1px solid #a8a8a8;border-radius:2.5px;box-sizing:border-box;"></div>
<svg style="position:absolute;left:674.57px;top:131.00px;" width="16" height="16" viewBox="0 0 16 16"><path d="M8 6 L12.5 12.5 H3.5 Z" fill="#ffbf40"/><text x="8" y="11.5" text-anchor="middle" font-family="Liberation Sans" font-weight="bold" font-size="9" fill="#222">2</text></svg>
<div style="position:absolute;left:696.57px;top:131.00px;width:16.50px;height:16.50px;background:#fff;border:1px solid #a8a8a8;border-radius:2.5px;box-sizing:border-box;"></div>
<svg style="position:absolute;left:696.57px;top:131.00px;" width="16" height="16" viewBox="0 0 16 16"><rect x="5.5" y="3" width="5" height="10" rx="1.5" fill="#fff" stroke="#bbb" stroke-width="0.8"/><text x="8" y="11.5" text-anchor="middle" font-family="Liberation Sans" font-size="8.5" fill="#444">1</text></svg>
<div class="t" style="left:674.37px;top:159.24px;font-size:17.2px;color:#555;font-weight:normal;">Leitung Wand</div>
<div class="t" style="left:673.57px;top:255.64px;font-size:12px;color:#555;font-weight:normal;">Electric</div>
<div class="t" style="left:917.07px;top:255.64px;font-size:12px;color:#555;font-weight:normal;width:59px;text-align:right;">| ELA | LP5</div>
<div style="position:absolute;left:982.57px;top:127.00px;width:308.50px;height:145.50px;background:#fff;border-radius:3px;box-shadow:0 0 0 1px #638d9b;overflow:hidden;"></div>
<div style="position:absolute;left:982.57px;top:153.00px;width:308.50px;height:119.50px;background:#638d9b;border-radius:0 0 3px 3px;"></div>
<div style="position:absolute;left:1067.21px;top:153.00px;width:88.94px;height:119.50px;background:#4e717b;"></div>
<div style="position:absolute;left:986.57px;top:131.00px;width:16.50px;height:16.50px;background:#fff;border:1px solid #a8a8a8;border-radius:2.5px;box-sizing:border-box;"></div>
<svg style="position:absolute;left:986.57px;top:131.00px;" width="16" height="16" viewBox="0 0 16 16"><rect x="1.5" y="1.5" width="12.5" height="12.5" rx="1" fill="#e05555"/></svg>
<div style="position:absolute;left:1008.57px;top:131.00px;width:16.50px;height:16.50px;background:#fff;border:1px solid #a8a8a8;border-radius:2.5px;box-sizing:border-box;"></div>
<svg style="position:absolute;left:1008.57px;top:131.00px;" width="16" height="16" viewBox="0 0 16 16"><path d="M8 6 L12.5 12.5 H3.5 Z" fill="#ffbf40"/><text x="8" y="11.5" text-anchor="middle" font-family="Liberation Sans" font-weight="bold" font-size="9" fill="#222">1</text></svg>
<div style="position:absolute;left:1030.57px;top:131.00px;width:16.50px;height:16.50px;background:#fff;border:1px solid #a8a8a8;border-radius:2.5px;box-sizing:border-box;"></div>
<svg style="position:absolute;left:1030.57px;top:131.00px;" width="16" height="16" viewBox="0 0 16 16"><rect x="2.5" y="3" width="11" height="8.5" fill="#333"/><path d="M4.5 11 L4.5 13.5 L7 11 Z" fill="#333"/><path d="M4.5 5.3 H11.5 M4.5 7.3 H11.5 M4.5 9.3 H9.5" stroke="#fff" stroke-width="0.9"/></svg>
<div class="t" style="left:986.37px;top:159.24px;font-size:17.2px;color:#fff;font-weight:normal;">2. Wand</div>
<div class="t" style="left:986.07px;top:255.64px;font-size:12px;color:#fff;font-weight:bold;">Drywall</div>
<div class="t" style="left:1225.07px;top:255.64px;font-size:12px;color:#fff;font-weight:bold;width:63px;text-align:right;">| DDL | LP5</div>
<div style="position:absolute;left:1294.57px;top:127.00px;width:308.50px;height:145.50px;background:#fff;border-radius:3px;box-shadow:0 0 0 1px #d6d6d6;overflow:hidden;"></div>
<div style="position:absolute;left:1294.57px;top:153.00px;width:308.50px;height:119.50px;background:#b9b9b9;border-radius:0 0 3px 3px;"></div>
<div style="position:absolute;left:1294.57px;top:152.50px;width:308.50px;height:1.00px;background:#cfcfcf;"></div>
<div style="position:absolute;left:1467.36px;top:153.00px;width:88.94px;height:119.50px;background:#b9b9b9;"></div>
<div style="position:absolute;left:1298.57px;top:131.00px;width:16.50px;height:16.50px;background:#fff;border:1px solid #a8a8a8;border-radius:2.5px;box-sizing:border-box;"></div>
<svg style="position:absolute;left:1298.57px;top:131.00px;" width="16" height="16" viewBox="0 0 16 16"><path d="M8 6 L12.5 12.5 H3.5 Z" fill="#ffbf40"/><text x="8" y="11.5" text-anchor="middle" font-family="Liberation Sans" font-weight="bold" font-size="9" fill="#222">3</text></svg>
<div class="t" style="left:1298.37px;top:159.24px;font-size:17.2px;color:#555;font-weight:normal;">Putzarbeiten</div>
<div class="t" style="left:1297.57px;top:255.64px;font-size:12px;color:#555;font-weight:normal;">Painter</div>
<div style="position:absolute;left:46.57px;top:275.50px;width:308.50px;height:80.50px;background:#fff;border-radius:3px;box-shadow:0 0 0 1px #b3c85a;overflow:hidden;"></div>
<div style="position:absolute;left:46.57px;top:302.00px;width:308.50px;height:54.00px;background:#b3c85a;border-radius:0 0 3px 3px;"></div>
<div style="position:absolute;left:131.21px;top:302.00px;width:88.94px;height:54.00px;background:#8c9e48;"></div>
<div style="position:absolute;left:50.57px;top:279.50px;width:16.50px;height:16.50px;background:#fff;border:1px solid #a8a8a8;border-radius:2.5px;box-sizing:border-box;"></div>
<svg style="position:absolute;left:50.57px;top:279.50px;" width="16" height="16" viewBox="0 0 16 16"><path d="M8 6 L12.5 12.5 H3.5 Z" fill="#ffbf40"/><text x="8" y="11.5" text-anchor="middle" font-family="Liberation Sans" font-weight="bold" font-size="9" fill="#222">2</text></svg>
<div class="t" style="left:49.97px;top:306.84px;font-size:17.2px;color:#555;font-weight:normal;">Rohrleitung</div>
<div style="position:absolute;left:0.00px;top:325.50px;width:1389.00px;height:18.00px;background:#f1f1f1;"></div>
<div style="position:absolute;left:19.00px;top:326.70px;width:341.00px;height:14.50px;background:#c1c1c1;"></div>
<svg style="position:absolute;left:5.00px;top:330.00px;" width="8" height="10" viewBox="0 0 8 10"><path d="M1 5 L6.5 0.5 V9.5 Z" fill="#a3a3a3"/></svg>
<svg style="position:absolute;left:1356.00px;top:330.00px;" width="8" height="10" viewBox="0 0 8 10"><path d="M7 5 L1.5 0.5 V9.5 Z" fill="#505050"/></svg>
<div style="position:absolute;left:1371.00px;top:325.50px;width:18.00px;height:18.00px;background:#dcdcdc;"></div>
<div style="position:absolute;left:1371.00px;top:127.00px;width:18.00px;height:199.00px;background:#f1f1f1;"></div>
<div style="position:absolute;left:1373.00px;top:145.00px;width:14.00px;height:15.50px;background:#c1c1c1;"></div>
<svg style="position:absolute;left:1375.00px;top:132.00px;" width="10" height="7" viewBox="0 0 10 7"><path d="M5 0.5 L9.5 6 H0.5 Z" fill="#a3a3a3"/></svg>
<svg style="position:absolute;left:1375.00px;top:311.00px;" width="10" height="7" viewBox="0 0 10 7"><path d="M5 6.5 L9.5 1 H0.5 Z" fill="#505050"/></svg>
<div style="position:absolute;left:1119.00px;top:137.00px;width:257.00px;height:194.00px;background:rgba(255,255,255,0.78);border-radius:6px;"></div>
<div style="position:absolute;left:1124.40px;top:140.30px;width:247.50px;height:185.30px;border:1px solid #7c7c7c;box-sizing:border-box;"></div>
<div style="position:absolute;left:1126.30px;top:142.00px;width:8.30px;height:3.40px;background:#fff;box-shadow:0 0 0 0.8px #a0a0a0;border-radius:1px;"></div>
<div style="position:absolute;left:1135.60px;top:142.30px;width:7.70px;height:2.80px;background:#4f8894;"></div>
<div style="position:absolute;left:1143.90px;top:142.00px;width:8.10px;height:3.40px;background:#fff;box-shadow:0 0 0 0.8px #a0a0a0;border-radius:1px;"></div>
<div style="position:absolute;left:1152.70px;top:142.30px;width:7.60px;height:2.80px;background:#4f8894;"></div>
<div style="position:absolute;left:1161.30px;top:142.00px;width:8.40px;height:3.40px;background:#b0b0b0;box-shadow:0 0 0 0.6px #999;"></div>
<div style="position:absolute;left:1170.20px;top:142.30px;width:7.30px;height:2.80px;background:#3d8ce0;"></div>
<div style="position:absolute;left:1178.50px;top:142.00px;width:8.10px;height:3.40px;background:#fff;box-shadow:0 0 0 0.8px #a0a0a0;border-radius:1px;"></div>
<div style="position:absolute;left:1187.40px;top:142.30px;width:7.80px;height:2.80px;background:#3d8ce0;"></div>
<div style="position:absolute;left:1195.70px;top:142.00px;width:8.60px;height:3.40px;background:#b0b0b0;box-shadow:0 0 0 0.6px #999;"></div>
<div style="position:absolute;left:1204.70px;top:142.00px;width:8.10px;height:3.40px;background:#fff;box-shadow:0 0 0 0.8px #a0a0a0;border-radius:1px;"></div>
<div style="position:absolute;left:1126.70px;top:146.70px;width:7.60px;height:2.20px;background:#b0c44a;"></div>
<div style="position:absolute;left:1178.70px;top:146.70px;width:7.60px;height:2.20px;background:#b0c44a;"></div>
<div style="position:absolute;left:1126.30px;top:154.50px;width:8.30px;height:3.40px;background:#fff;box-shadow:0 0 0 0.8px #a0a0a0;border-radius:1px;"></div>
<div style="position:absolute;left:1135.60px;top:154.80px;width:7.70px;height:2.80px;background:#4f8894;"></div>
<div style="position:absolute;left:1143.90px;top:154.50px;width:8.10px;height:3.40px;background:#fff;box-shadow:0 0 0 0.8px #a0a0a0;border-radius:1px;"></div>
<div style="position:absolute;left:1152.70px;top:154.80px;width:7.60px;height:2.80px;background:#4f8894;"></div>
<div style="position:absolute;left:1161.30px;top:154.50px;width:8.40px;height:3.40px;background:#b0b0b0;box-shadow:0 0 0 0.6px #999;"></div>
<div style="position:absolute;left:1170.20px;top:154.80px;width:7.30px;height:2.80px;background:#3d8ce0;"></div>
<div style="position:absolute;left:1178.50px;top:154.50px;width:8.10px;height:3.40px;background:#fff;box-shadow:0 0 0 0.8px #a0a0a0;border-radius:1px;"></div>
<div style="position:absolute;left:1187.40px;top:154.80px;width:7.80px;height:2.80px;background:#3d8ce0;"></div>
<div style="position:absolute;left:1195.70px;top:154.50px;width:8.60px;height:3.40px;background:#b0b0b0;box-shadow:0 0 0 0.6px #999;"></div>
<div style="position:absolute;left:1204.70px;top:154.50px;width:8.10px;height:3.40px;background:#fff;box-shadow:0 0 0 0.8px #a0a0a0;border-radius:1px;"></div>
<div style="position:absolute;left:1126.70px;top:159.20px;width:7.60px;height:2.20px;background:#b0c44a;"></div>
<div style="position:absolute;left:1178.70px;top:159.20px;width:7.60px;height:2.20px;background:#b0c44a;"></div>
<div style="position:absolute;left:1126.30px;top:166.70px;width:8.30px;height:3.40px;background:#fff;box-shadow:0 0 0 0.8px #a0a0a0;border-radius:1px;"></div>
<div style="position:absolute;left:1135.60px;top:167.00px;width:7.70px;height:2.80px;background:#4f8894;"></div>
<div style="position:absolute;left:1143.90px;top:166.70px;width:8.10px;height:3.40px;background:#fff;box-shadow:0 0 0 0.8px #a0a0a0;border-radius:1px;"></div>
<div style="position:absolute;left:1152.70px;top:167.00px;width:7.60px;height:2.80px;background:#4f8894;"></div>
<div style="position:absolute;left:1161.30px;top:166.70px;width:8.40px;height:3.40px;background:#b0b0b0;box-shadow:0 0 0 0.6px #999;"></div>
<div style="position:absolute;left:1170.20px;top:167.00px;width:7.30px;height:2.80px;background:#3d8ce0;"></div>
<div style="position:absolute;left:1178.50px;top:166.70px;width:8.10px;height:3.40px;background:#fff;box-shadow:0 0 0 0.8px #a0a0a0;border-radius:1px;"></div>
<div style="position:absolute;left:1187.40px;top:167.00px;width:7.80px;height:2.80px;background:#3d8ce0;"></div>
<div style="position:absolute;left:1195.70px;top:166.70px;width:8.60px;height:3.40px;background:#b0b0b0;box-shadow:0 0 0 0.6px #999;"></div>
<div style="position:absolute;left:1204.70px;top:166.70px;width:8.10px;height:3.40px;background:#fff;box-shadow:0 0 0 0.8px #a0a0a0;border-radius:1px;"></div>
<div style="position:absolute;left:1126.70px;top:171.40px;width:7.60px;height:2.20px;background:#b0c44a;"></div>
<div style="position:absolute;left:1178.70px;top:171.40px;width:7.60px;height:2.20px;background:#b0c44a;"></div>
<div style="position:absolute;left:1126.30px;top:179.00px;width:16.70px;height:3.40px;background:#fff;box-shadow:0 0 0 0.8px #a0a0a0;border-radius:1px;"></div>
<div style="position:absolute;left:1144.00px;top:179.30px;width:7.50px;height:2.80px;background:#4f8894;"></div>
<div style="position:absolute;left:1152.30px;top:179.00px;width:7.70px;height:3.40px;background:#fff;box-shadow:0 0 0 0.8px #a0a0a0;border-radius:1px;"></div>
<div style="position:absolute;left:1162.00px;top:179.30px;width:7.50px;height:2.80px;background:#4f8894;"></div>
<div style="position:absolute;left:1170.00px;top:179.00px;width:8.00px;height:3.40px;background:#b0b0b0;box-shadow:0 0 0 0.6px #999;"></div>
<div style="position:absolute;left:1179.00px;top:179.30px;width:16.00px;height:2.80px;background:#3d8ce0;"></div>
<div style="position:absolute;left:1196.00px;top:179.00px;width:8.00px;height:3.40px;background:#fff;box-shadow:0 0 0 0.8px #a0a0a0;border-radius:1px;"></div>
<div style="position:absolute;left:1205.00px;top:179.30px;width:7.00px;height:2.80px;background:#3d8ce0;"></div>
<div style="position:absolute;left:1213.00px;top:179.00px;width:8.00px;height:3.40px;background:#b0b0b0;box-shadow:0 0 0 0.6px #999;"></div>
<div style="position:absolute;left:1221.50px;top:179.00px;width:8.50px;height:3.40px;background:#fff;box-shadow:0 0 0 0.8px #a0a0a0;border-radius:1px;"></div>
<div style="position:absolute;left:1127.00px;top:183.70px;width:16.00px;height:2.20px;background:#b0c44a;"></div>
<div style="position:absolute;left:1196.00px;top:183.70px;width:7.50px;height:2.20px;background:#b0c44a;"></div>
<div style="position:absolute;left:1213.50px;top:191.60px;width:25.50px;height:3.40px;background:#fff;box-shadow:0 0 0 0.8px #a0a0a0;border-radius:1px;"></div>
<div style="position:absolute;left:1239.50px;top:191.90px;width:34.00px;height:2.80px;background:#3d8ce0;"></div>
<div style="position:absolute;left:1213.50px;top:196.50px;width:25.00px;height:2.20px;background:#b0c44a;"></div>
<div style="position:absolute;left:1125.20px;top:141.20px;width:38.20px;height:5.30px;border:1px solid #e8836b;box-sizing:border-box;border-radius:1px;"></div>
<div style="position:absolute;left:1125.00px;top:165.90px;width:149.00px;height:0.80px;background:#cfd6d9;"></div>
<div style="position:absolute;left:1125.00px;top:178.30px;width:149.00px;height:0.80px;background:#cfd6d9;"></div>
<div style="position:absolute;left:1125.00px;top:191.10px;width:149.00px;height:0.80px;background:#cfd6d9;"></div>
<div style="position:absolute;left:1125.00px;top:203.80px;width:149.00px;height:0.80px;background:#cfd6d9;"></div>
</div>
<div style="position:absolute;left:75px;top:527.5px;width:1655px;height:6.5px;background:#f3f3f3;"></div>
<div style="position:absolute;left:890px;top:528px;width:25px;height:1px;background:#777;"></div>
<div style="position:absolute;left:890px;top:530px;width:25px;height:3.8px;background:linear-gradient(#555,#999);"></div>
<div style="position:absolute;left:75px;top:534px;width:1655px;height:314px;background:#fff;"></div>
<div style="position:absolute;left:88px;top:554.5px;width:13px;height:13px;border-radius:50%;border:1.3px solid #9a9a9a;box-sizing:border-box;"></div>
<div style="position:absolute;left:91.5px;top:558px;width:6px;height:6px;border-radius:50%;background:#9a9a9a;"></div>
<div class="t" style="left:126.3px;top:552.50px;font-size:15px;color:#9b9b9b;font-weight:normal;">ATTACHMENTS</div>
<div style="position:absolute;left:253.8px;top:528.8px;width:51px;height:51px;border-radius:50%;background:#b5c96b;"></div>
<div class="t" style="left:271px;top:540.06px;font-size:31px;color:#333;font-weight:normal;">2</div>
<svg style="position:absolute;left:342px;top:556px;" width="20" height="14" viewBox="0 0 20 14"><path d="M5 13.5 Q0.5 13.5 0.5 9.5 Q0.5 5.8 4.3 5.5 Q5.8 0.8 10.5 0.8 Q15.5 0.8 16.3 5.8 Q19.5 6.2 19.5 9.8 Q19.5 13.5 15.5 13.5 Z" fill="#b3b3b3"/><path d="M10 4.5 L13.5 8.5 H11.3 V11.5 H8.7 V8.5 H6.5 Z" fill="#fff"/></svg>
<div class="t" style="left:364.6px;top:556.70px;font-size:15px;color:#b3b3b3;font-weight:normal;">Upload Attachment</div>
<svg style="position:absolute;left:512px;top:556px;" width="20" height="14" viewBox="0 0 20 14"><path d="M5 13.5 Q0.5 13.5 0.5 9.5 Q0.5 5.8 4.3 5.5 Q5.8 0.8 10.5 0.8 Q15.5 0.8 16.3 5.8 Q19.5 6.2 19.5 9.8 Q19.5 13.5 15.5 13.5 Z" fill="#b3b3b3"/><path d="M10 12 L13.5 8 H11.3 V4.8 H8.7 V8 H6.5 Z" fill="#fff"/></svg>
<div class="t" style="left:534.6px;top:556.70px;font-size:15px;color:#b3b3b3;font-weight:normal;">Download</div>
<svg style="position:absolute;left:625px;top:555px;" width="13" height="16" viewBox="0 0 13 16"><rect x="0.5" y="1.5" width="12" height="2" fill="#b3b3b3"/><rect x="4" y="0" width="5" height="2" fill="#b3b3b3"/><path d="M1.5 4.5 H11.5 L10.8 15.5 H2.2 Z" fill="#b3b3b3"/></svg>
<div class="t" style="left:644px;top:556.70px;font-size:15px;color:#b3b3b3;font-weight:normal;">Remove</div>
<svg style="position:absolute;left:1691px;top:557px;" width="13" height="13" viewBox="0 0 13 13"><path d="M1 1 L12 12 M12 1 L1 12" stroke="#555" stroke-width="1.5"/></svg>
<div style="position:absolute;left:75px;top:589px;width:246px;height:34px;background:#9b9b9b;"></div>
<div class="t" style="left:80.7px;top:598.50px;font-size:15px;color:#fff;font-weight:normal;">All Fragnet Steps</div>
<div class="t" style="left:81px;top:631.60px;font-size:15px;color:#444;font-weight:normal;">Selected Fragnet Step(s)</div>
<div style="position:absolute;left:321px;top:588px;width:2px;height:260px;background:#eeeeee;"></div>
<div style="position:absolute;left:323px;top:588px;width:1407px;height:2px;background:#efefef;"></div>
<div style="position:absolute;left:323px;top:644.5px;width:1407px;height:2.5px;background:#e4e4e4;"></div>
<div style="position:absolute;left:323px;top:647px;width:1407px;height:5px;background:linear-gradient(#f7f7f7,#fff);"></div>
<div style="position:absolute;left:336px;top:608px;width:18.5px;height:18.5px;background:#fff;border:1px solid #cfcfcf;box-sizing:border-box;"></div>
<div class="t" style="left:397.5px;top:611.30px;font-size:15px;color:#3a3a3a;font-weight:bold;">FRAGN…</div>
<svg style="position:absolute;left:488px;top:611px;" width="15" height="10" viewBox="0 0 15 10"><path d="M0.5 1 H14 M3 4.5 H11.5 M5.5 8 H9" stroke="#8a8a8a" stroke-width="1.3"/></svg>
<svg style="position:absolute;left:529px;top:609.5px;" width="12" height="17" viewBox="0 0 12 17"><path d="M1 6 L6 1 L11 6 M1 11 L6 16 L11 11" fill="none" stroke="#d4d4d4" stroke-width="1.6"/></svg>
<div style="position:absolute;left:567.25px;top:606px;width:1.6px;height:24.5px;background:#d9d9d9;"></div>
<div class="t" style="left:584.3px;top:611.30px;font-size:15px;color:#3a3a3a;font-weight:bold;">TRADE-COMPA…</div>
<svg style="position:absolute;left:735.5px;top:611px;" width="15" height="10" viewBox="0 0 15 10"><path d="M0.5 1 H14 M3 4.5 H11.5 M5.5 8 H9" stroke="#8a8a8a" stroke-width="1.3"/></svg>
<svg style="position:absolute;left:777px;top:609.5px;" width="12" height="17" viewBox="0 0 12 17"><path d="M1 6 L6 1 L11 6 M1 11 L6 16 L11 11" fill="none" stroke="#d4d4d4" stroke-width="1.6"/></svg>
<div style="position:absolute;left:815.25px;top:606px;width:1.6px;height:24.5px;background:#d9d9d9;"></div>
<div class="t" style="left:832px;top:611.30px;font-size:15px;color:#3a3a3a;font-weight:bold;">TAKT ZONE</div>
<svg style="position:absolute;left:937px;top:611px;" width="15" height="10" viewBox="0 0 15 10"><path d="M0.5 1 H14 M3 4.5 H11.5 M5.5 8 H9" stroke="#8a8a8a" stroke-width="1.3"/></svg>
<svg style="position:absolute;left:978.5px;top:609.5px;" width="12" height="17" viewBox="0 0 12 17"><path d="M1 6 L6 1 L11 6 M1 11 L6 16 L11 11" fill="none" stroke="#d4d4d4" stroke-width="1.6"/></svg>
<div style="position:absolute;left:1026.25px;top:606px;width:1.6px;height:24.5px;background:#d9d9d9;"></div>
<div class="t" style="left:1043px;top:611.30px;font-size:15px;color:#3a3a3a;font-weight:bold;">NAME</div>
<svg style="position:absolute;left:1108px;top:611px;" width="15" height="10" viewBox="0 0 15 10"><path d="M0.5 1 H14 M3 4.5 H11.5 M5.5 8 H9" stroke="#8a8a8a" stroke-width="1.3"/></svg>
<svg style="position:absolute;left:1150px;top:609.5px;" width="12" height="17" viewBox="0 0 12 17"><path d="M1 6 L6 1 L11 6 M1 11 L6 16 L11 11" fill="none" stroke="#d4d4d4" stroke-width="1.6"/></svg>
<div style="position:absolute;left:1212.25px;top:606px;width:1.6px;height:24.5px;background:#d9d9d9;"></div>
<div class="t" style="left:1228.5px;top:611.30px;font-size:15px;color:#3a3a3a;font-weight:bold;">FORMAT</div>
<svg style="position:absolute;left:1313px;top:611px;" width="15" height="10" viewBox="0 0 15 10"><path d="M0.5 1 H14 M3 4.5 H11.5 M5.5 8 H9" stroke="#8a8a8a" stroke-width="1.3"/></svg>
<svg style="position:absolute;left:1354px;top:609.5px;" width="12" height="17" viewBox="0 0 12 17"><path d="M1 6 L6 1 L11 6 M1 11 L6 16 L11 11" fill="none" stroke="#d4d4d4" stroke-width="1.6"/></svg>
<div style="position:absolute;left:1397.75px;top:606px;width:1.6px;height:24.5px;background:#d9d9d9;"></div>
<div class="t" style="left:1415.5px;top:611.30px;font-size:15px;color:#3a3a3a;font-weight:bold;"><span style="display:inline-block;width:4px;overflow:hidden;vertical-align:top;">S</span></div>
<svg style="position:absolute;left:1442px;top:611px;" width="15" height="10" viewBox="0 0 15 10"><path d="M0.5 1 H14 M3 4.5 H11.5 M5.5 8 H9" stroke="#8a8a8a" stroke-width="1.3"/></svg>
<svg style="position:absolute;left:1483px;top:609.5px;" width="12" height="17" viewBox="0 0 12 17"><path d="M1 6 L6 1 L11 6 M1 11 L6 16 L11 11" fill="none" stroke="#d4d4d4" stroke-width="1.6"/></svg>
<div style="position:absolute;left:1520.95px;top:606px;width:1.6px;height:24.5px;background:#d9d9d9;"></div>
<div class="t" style="left:1537px;top:611.30px;font-size:15px;color:#3a3a3a;font-weight:bold;">ADDED…</div>
<svg style="position:absolute;left:1627.5px;top:611px;" width="15" height="10" viewBox="0 0 15 10"><path d="M0.5 1 H14 M3 4.5 H11.5 M5.5 8 H9" stroke="#8a8a8a" stroke-width="1.3"/></svg>
<svg style="position:absolute;left:1668.7px;top:609.5px;" width="12" height="17" viewBox="0 0 12 17"><path d="M1 6 L6 1 L11 6 M1 11 L6 16 L11 11" fill="none" stroke="#d4d4d4" stroke-width="1.6"/></svg>
<div style="position:absolute;left:1706.85px;top:606px;width:1.6px;height:24.5px;background:#d9d9d9;"></div>
<div class="t" style="left:1722.4px;top:611.30px;font-size:15px;color:#3a3a3a;font-weight:bold;">A</div>
<div style="position:absolute;left:323px;top:713.1px;width:1407px;height:1.2px;background:#f0f0f0;"></div>
<div style="position:absolute;left:336px;top:672.6px;width:18.5px;height:18.5px;background:#fff;border:1px solid #cfcfcf;box-sizing:border-box;"></div>
<div class="t" style="left:398px;top:674.60px;font-size:15px;color:#444;font-weight:normal;">Leitung Boden</div>
<div class="t" style="left:585px;top:674.60px;font-size:15px;color:#444;font-weight:normal;">Electric|ELA|LP5</div>
<div class="t" style="left:832.5px;top:674.60px;font-size:15px;color:#444;font-weight:normal;">R1 Small Office 1st Floor</div>
<div class="t" style="left:1094px;top:673.80px;font-size:15px;color:#5b9bd5;font-weight:normal;">image2</div>
<div class="t" style="left:1230px;top:674.60px;font-size:15px;color:#444;font-weight:normal;">JPG-file</div>
<div class="t" style="left:1416px;top:674.60px;font-size:15px;color:#444;font-weight:normal;">42.0 KB</div>
<div class="t" style="left:1539px;top:674.60px;font-size:15px;color:#444;font-weight:normal;">Anne Reuter</div>
<div class="t" style="left:1725.4px;top:674.60px;font-size:15px;color:#444;font-weight:normal;">1</div>
<svg style="position:absolute;left:1044px;top:664.1px;" width="37" height="37" viewBox="0 0 37 37"><rect width="37" height="37" fill="#f7f7f7"/><rect x="0" y="0" width="22" height="37" fill="#0aaaea"/><rect x="11" y="11" width="26" height="18" fill="#fbfbfb"/><rect x="1" y="4" width="7" height="2" fill="#fff"/><rect x="20" y="18" width="3" height="1.5" fill="#bbb"/></svg>
<div style="position:absolute;left:323px;top:776.9px;width:1407px;height:1.2px;background:#f0f0f0;"></div>
<div style="position:absolute;left:336px;top:736.6px;width:18.5px;height:18.5px;background:#fff;border:1px solid #cfcfcf;box-sizing:border-box;"></div>
<div class="t" style="left:398px;top:738.60px;font-size:15px;color:#444;font-weight:normal;">Leitung Wand</div>
<div class="t" style="left:585px;top:738.60px;font-size:15px;color:#444;font-weight:normal;">Electric|ELA|LP5</div>
<div class="t" style="left:832.5px;top:738.60px;font-size:15px;color:#444;font-weight:normal;">R1 Small Office 1st Floor</div>
<div class="t" style="left:1094px;top:737.80px;font-size:15px;color:#5b9bd5;font-weight:normal;">image1</div>
<div class="t" style="left:1230px;top:738.60px;font-size:15px;color:#444;font-weight:normal;">JPG-file</div>
<div class="t" style="left:1416px;top:738.60px;font-size:15px;color:#444;font-weight:normal;">42.0 KB</div>
<div class="t" style="left:1539px;top:738.60px;font-size:15px;color:#444;font-weight:normal;">Anne Reuter</div>
<div class="t" style="left:1725.4px;top:738.60px;font-size:15px;color:#444;font-weight:normal;">1</div>
<svg style="position:absolute;left:1044px;top:728.1px;" width="37" height="37" viewBox="0 0 37 37"><rect width="37" height="37" fill="#fafafa"/><rect x="22" y="0" width="15" height="37" fill="#ffb800"/><rect x="10" y="9" width="22" height="19" fill="#fbfbfb"/><rect x="1" y="4" width="7" height="1.5" fill="#ccc"/><rect x="20" y="18" width="3" height="1.5" fill="#bbb"/></svg>
<div style="position:absolute;left:323px;top:831px;width:1407px;height:17px;background:#f1f1f1;"></div>
<div style="position:absolute;left:341px;top:832px;width:1225px;height:16px;background:#c1c1c1;"></div>
<svg style="position:absolute;left:328px;top:835px;" width="8" height="10" viewBox="0 0 8 10"><path d="M1 5 L6.5 0.5 V9.5 Z" fill="#a3a3a3"/></svg>
<svg style="position:absolute;left:1717px;top:835px;" width="8" height="10" viewBox="0 0 8 10"><path d="M7 5 L1.5 0.5 V9.5 Z" fill="#505050"/></svg>
</body></html>
